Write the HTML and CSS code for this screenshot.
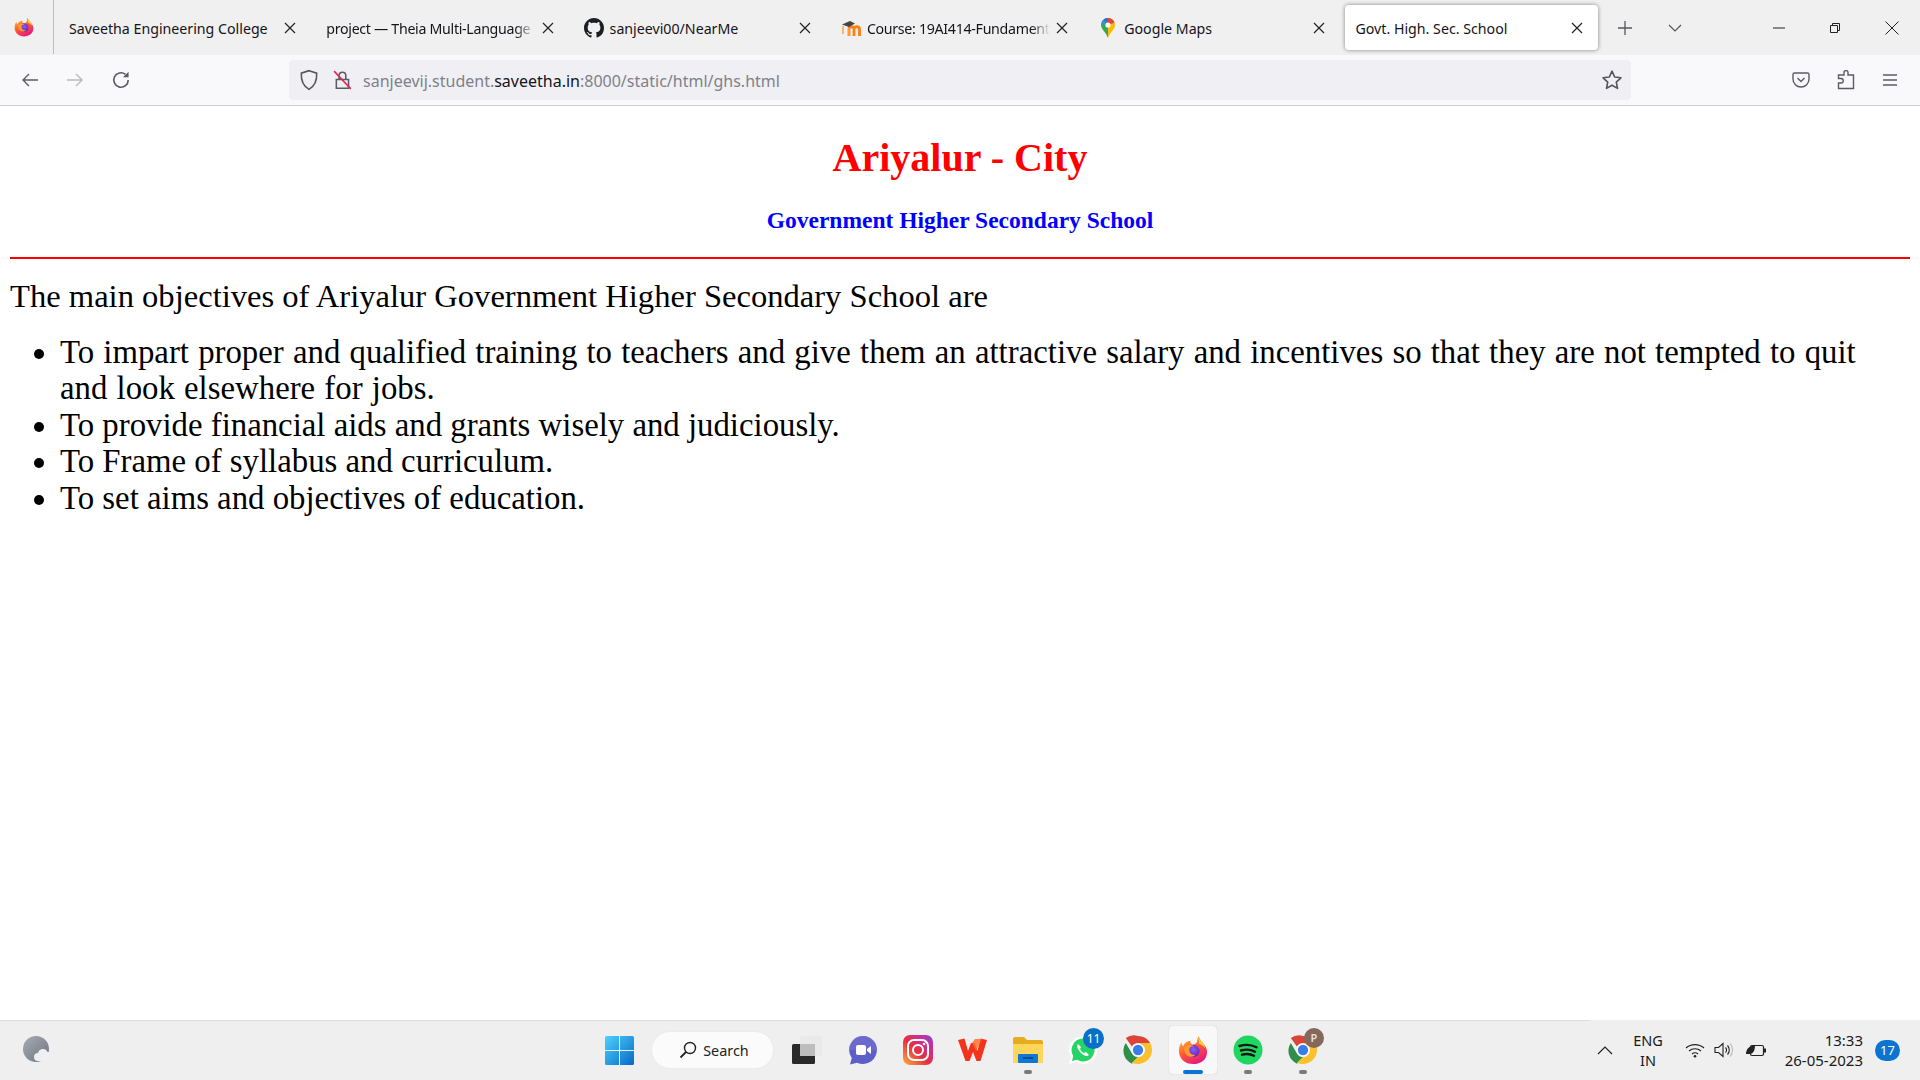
FILE: index.html
```html
<!DOCTYPE html>
<html lang="en">
<head>
<meta charset="utf-8">
<title>Govt. High. Sec. School</title>
<link rel="stylesheet" href="styles.css">
</head>
<body>
<svg class="defs" width="0" height="0" aria-hidden="true">
  <defs>
    <linearGradient id="ffbody" x1="0.2" y1="0.1" x2="0.7" y2="1">
      <stop offset="0" stop-color="#ffb02e"/><stop offset="0.45" stop-color="#ff5634"/><stop offset="1" stop-color="#e31587"/>
    </linearGradient>
    <radialGradient id="ffglobe" cx="0.5" cy="0.4" r="0.6">
      <stop offset="0" stop-color="#9059ff"/><stop offset="1" stop-color="#5b2ab5"/>
    </radialGradient>
    <symbol id="firefox" viewBox="0 0 32 32">
      <path d="M22 1c1 4 3 5 5 8 2 3 4 5 4 9 0 8-6.600 13-15 13S1 25 1 17c0-4 1-7 3-9 0 2 .6 3 1.500 4 1-3 4-6 8-6-1 2 0 3 2 4 3 0 5-2 5-4 0-2 1-3 1.500-5z" fill="url(#ffbody)"/>
      <path d="M21 3c4 3 7 6 8 11-2-3-5-4-7-5 1-2 0-4-1-6z" fill="#ffd43b"/>
      <circle cx="16.500" cy="17" r="6.500" fill="url(#ffglobe)"/>
      <path d="M7 13c3-3 7-3 10-1-3 0-5 1-5 4 0 4 4 6 7 5-3 3-8 3-11-1-1-2-2-5-1-7z" fill="#ff9a2e"/>
    </symbol>
    <symbol id="chrome" viewBox="0 0 32 32">
      <path d="M16 1a15 15 0 0 1 13 7.500H16a7.500 7.500 0 0 0-6.500 3.750L3 3.200 A15 15 0 0 1 16 1z" fill="#db4437"/>
      <path d="M3 8.500l6.500 11.250A7.500 7.500 0 0 0 16 23.500l-6.500 7.100A15 15 0 0 1 3 8.500z" fill="#2f8f4a"/>
      <path d="M29 8.500A15 15 0 0 1 9.500 29.500L16 23.500a7.500 7.500 0 0 0 6.500-11.250L16 8.500z" fill="#fbc02d"/>
      <circle cx="16" cy="16" r="7" fill="#fff"/>
      <circle cx="16" cy="16" r="5.500" fill="#3b7de8"/>
    </symbol>
    <symbol id="closex" viewBox="0 0 12 12">
      <path d="M1 1l10 10M11 1L1 11" fill="none" stroke="#222" stroke-width="1.200"/>
    </symbol>
  </defs>
</svg>

<div class="window">
  <header class="tabstrip">
    <div class="appcell">
      <svg class="favicon" width="20" height="20"><use href="#firefox"/></svg>
    </div>
    <div class="tabs">
      <div class="tab">
        <span class="tab-title">Saveetha Engineering College</span>
        <svg class="close" width="12" height="12"><use href="#closex"/></svg>
      </div>
      <div class="tab">
        <span class="tab-title fade tight">project — Theia Multi-Language</span>
        <svg class="close" width="12" height="12"><use href="#closex"/></svg>
      </div>
      <div class="tab">
        <svg class="favicon" width="20" height="20" viewBox="0 0 16 16"><path fill="#1b1f23" d="M8 0C3.580 0 0 3.580 0 8c0 3.540 2.290 6.530 5.470 7.590.4.070.55-.17.55-.38 0-.19-.01-.82-.01-1.490-2.010.37-2.530-.49-2.690-.94-.09-.23-.48-.94-.82-1.130-.28-.15-.68-.52-.01-.53.63-.01 1.080.58 1.230.82.720 1.210 1.870.87 2.330.66.070-.52.280-.87.510-1.070-1.780-.2-3.640-.89-3.640-3.950 0-.87.310-1.590.820-2.150-.08-.2-.36-1.020.08-2.120 0 0 .67-.21 2.200.82.640-.18 1.320-.27 2-.27s1.360.09 2 .27c1.530-1.040 2.200-.82 2.200-.82.440 1.100.160 1.920.080 2.120.51.560.82 1.270.82 2.150 0 3.070-1.870 3.750-3.650 3.950.29.250.54.730.54 1.480 0 1.070-.01 1.930-.01 2.200 0 .21.150.46.550.38A8.010 8.010 0 0 0 16 8c0-4.420-3.580-8-8-8z"/></svg>
        <span class="tab-title">sanjeevi00/NearMe</span>
        <svg class="close" width="12" height="12"><use href="#closex"/></svg>
      </div>
      <div class="tab">
        <svg class="favicon" width="20" height="20" viewBox="0 0 20 20"><path d="M8 18v-7c0-3 5-3 5 0v7M13 18v-7c0-3 5.500-3 5.500 0v7" fill="none" stroke="#f98012" stroke-width="2.800"/><path d="M2 8v8M8 18v-8" fill="none" stroke="#f9a24e" stroke-width="1.500"/><path d="M1 6.500L9 3l5 2.500-6 3.500z" fill="#444"/></svg>
        <span class="tab-title fade tight">Course: 19AI414-Fundament</span>
        <svg class="close" width="12" height="12"><use href="#closex"/></svg>
      </div>
      <div class="tab">
        <svg class="favicon" width="20" height="20" viewBox="0 0 20 20"><path d="M10 0a7 7 0 0 0-7 7c0 4.500 5 7 7 13z" fill="#34a853"/><path d="M10 0a7 7 0 0 1 7 7c0 4.500-5 7-7 13z" fill="#fbbc04"/><path d="M4.800 2.300A7 7 0 0 1 10 0v4.500z" fill="#1a73e8"/><path d="M10 0a7 7 0 0 1 6.500 4.500L10 7z" fill="#ea4335"/><path d="M3 7a7 7 0 0 1 1.800-4.700L8 5z" fill="#4285f4"/><circle cx="10" cy="7" r="2.600" fill="#fff"/></svg>
        <span class="tab-title">Google Maps</span>
        <svg class="close" width="12" height="12"><use href="#closex"/></svg>
      </div>
      <div class="tab active">
        <span class="tab-title">Govt. High. Sec. School</span>
        <svg class="close" width="12" height="12"><use href="#closex"/></svg>
      </div>
    </div>
    <div class="tab-actions">
      <svg width="16" height="16" viewBox="0 0 16 16"><path d="M8 1v14M1 8h14" stroke="#55555c" stroke-width="1.300" fill="none"/></svg>
      <svg width="14" height="8" viewBox="0 0 14 8"><path d="M1 1l6 6 6-6" stroke="#55555c" stroke-width="1.200" fill="none"/></svg>
    </div>
    <div class="win-controls">
      <svg width="12" height="12" viewBox="0 0 12 12"><path d="M0 6h12" stroke="#222" stroke-width="1"/></svg>
      <svg width="12" height="12" viewBox="0 0 12 12"><path d="M1.500 3.500h7v7h-7zM3.500 3.500v-2h7v7h-2" fill="none" stroke="#222" stroke-width="1"/></svg>
      <svg width="14" height="14" viewBox="0 0 14 14"><path d="M.5.500l13 13M13.500.500l-13 13" stroke="#222" stroke-width="1"/></svg>
    </div>
  </header>

  <nav class="toolbar">
    <div class="nav-btns">
      <svg width="18" height="16" viewBox="0 0 18 16"><path d="M17 8H2M8 2L2 8l6 6" fill="none" stroke="#5b5b66" stroke-width="1.400"/></svg>
      <svg width="18" height="16" viewBox="0 0 18 16"><path d="M1 8h15M10 2l6 6-6 6" fill="none" stroke="#b9b9bf" stroke-width="1.400"/></svg>
      <svg width="20" height="20" viewBox="0 0 18 18"><path d="M15.500 9A6.500 6.500 0 1 1 13 3.900" fill="none" stroke="#5b5b66" stroke-width="1.500"/><path d="M15.800 1.500v5h-5z" fill="#5b5b66"/></svg>
    </div>
    <div class="urlbar">
      <svg width="20" height="22" viewBox="0 0 18 20"><path d="M9 1.500l7 2.300c.3 6.500-1.500 11.500-7 14.700C3.500 15.300 1.700 10.300 2 3.800z" fill="none" stroke="#55555c" stroke-width="1.400"/></svg>
      <svg class="lock" width="20" height="24" viewBox="0 0 18 20"><path d="M3 9.500h11v8H3zM5.500 9.500V6a3 3 0 0 1 6 0v3.500" fill="none" stroke="#5b5b66" stroke-width="1.400"/><path d="M1 2l15 16" stroke="#e22850" stroke-width="1.400"/></svg>
      <span class="url"><span class="dim">sanjeevij.student.</span>saveetha.in<span class="dim">:8000/static/html/ghs.html</span></span>
      <svg class="star" width="22" height="22" viewBox="0 0 20 20"><path d="M10 2l2.400 5.300 5.700.7-4.200 3.900 1.100 5.700-5-2.900-5 2.900 1.100-5.700L1.900 8l5.700-.7z" fill="none" stroke="#55555c" stroke-width="1.500" stroke-linejoin="round"/></svg>
    </div>
    <div class="tool-btns">
      <svg width="18" height="18" viewBox="0 0 18 18"><path d="M2.500 2h13A1.500 1.500 0 0 1 17 3.500V8A8 8 0 0 1 1 8V3.500A1.500 1.500 0 0 1 2.500 2z" fill="none" stroke="#5b5b66" stroke-width="1.400"/><path d="M5.500 7L9 10.500 12.500 7" fill="none" stroke="#5b5b66" stroke-width="1.500"/></svg>
      <svg width="18" height="20" viewBox="0 0 18 20"><path d="M7 2.500a2 2 0 0 1 4 0V5h5.500v13.500H1.500V13H4a2 2 0 0 0 0-4.500H1.500V5H7z" fill="none" stroke="#5b5b66" stroke-width="1.400"/></svg>
      <svg width="16" height="14" viewBox="0 0 16 14"><path d="M1 2h14M1 7h14M1 12h14" stroke="#5b5b66" stroke-width="1.400"/></svg>
    </div>
  </nav>

  <main class="page">
    <h1 class="city">Ariyalur - City</h1>
    <h2 class="school">Government Higher Secondary School</h2>
    <hr class="rule">
    <p class="intro">The main objectives of Ariyalur Government Higher Secondary School are</p>
    <ul class="objectives">
      <li class="long">To impart proper and qualified training to teachers and give them an attractive salary and incentives so that they are not tempted to quit and look elsewhere for jobs.</li>
      <li>To provide financial aids and grants wisely and judiciously.</li>
      <li>To Frame of syllabus and curriculum.</li>
      <li>To set aims and objectives of education.</li>
    </ul>
  </main>

  <footer class="taskbar">
    <div class="task-left">
      <svg width="30" height="30" viewBox="0 0 30 30"><defs><linearGradient id="moon" x1="0" y1="0" x2="1" y2="1"><stop offset="0" stop-color="#a6abb3"/><stop offset="1" stop-color="#6f7680"/></linearGradient></defs><circle cx="14" cy="14" r="13" fill="url(#moon)"/><path d="M16 26a4 4 0 0 1 0-8 5 5 0 0 1 9.500-1 4.500 4.500 0 0 1 1 9z" fill="#eef0f2"/></svg>
    </div>
    <div class="task-center">
      <div class="tile">
        <svg width="29" height="29" viewBox="0 0 29 29"><defs><linearGradient id="win" x1="0" y1="0" x2="1" y2="1"><stop offset="0" stop-color="#4fd1fb"/><stop offset="1" stop-color="#0669c9"/></linearGradient></defs><path fill="url(#win)" d="M0 1.500A1.500 1.500 0 0 1 1.500 0H14v14H0zM15 0h12.500A1.500 1.500 0 0 1 29 1.500V14H15zM0 15h14v14H1.500A1.500 1.500 0 0 1 0 27.500zM15 15h14v12.500a1.500 1.500 0 0 1-1.500 1.500H15z"/></svg>
      </div>
      <div class="search">
        <svg width="18" height="18" viewBox="0 0 18 18"><circle cx="11" cy="7" r="5.500" fill="none" stroke="#222" stroke-width="1.400"/><path d="M7 11l-5.500 5.500" stroke="#222" stroke-width="1.800"/></svg>
        <span>Search</span>
      </div>
      <div class="tile">
        <svg width="32" height="30" viewBox="0 0 32 30"><rect x="8" y="1" width="22" height="20" rx="1.500" fill="#e9e9e9"/><rect x="0" y="9" width="23" height="20" rx="1.500" fill="#2a2a2a"/><rect x="8" y="9" width="15" height="12" fill="#bdbdbd"/></svg>
      </div>
      <div class="tile">
        <svg width="30" height="30" viewBox="0 0 30 30"><path d="M15 1a14 14 0 1 1-6 26.700L2 29.500l1.800-6.500A14 14 0 0 1 15 1z" fill="#5b5fc7"/><path d="M15 1a14 14 0 0 1 14 14H1A14 14 0 0 1 15 1z" fill="#7c6fd0" opacity=".6"/><rect x="8" y="10" width="10" height="10" rx="2" fill="#fff"/><path d="M19 14l4-3v8l-4-3z" fill="#fff"/></svg>
      </div>
      <div class="tile">
        <svg width="30" height="30" viewBox="0 0 30 30"><defs><linearGradient id="ig" x1="0" y1="1" x2="1" y2="0"><stop offset="0" stop-color="#fdb03a"/><stop offset=".45" stop-color="#e6303f"/><stop offset=".8" stop-color="#c72ea0"/><stop offset="1" stop-color="#5f5ad2"/></linearGradient></defs><rect width="30" height="30" rx="7" fill="url(#ig)"/><rect x="5" y="5" width="20" height="20" rx="6" fill="none" stroke="#fff" stroke-width="2"/><circle cx="15" cy="15" r="5" fill="none" stroke="#fff" stroke-width="2"/><circle cx="21" cy="9" r="1.300" fill="#fff"/></svg>
      </div>
      <div class="tile">
        <svg width="30" height="26" viewBox="0 0 30 26"><path d="M0 3l6.500-1.500L10 14l3-8h3.500l3 8 3-12.500L29 3l-6.500 21h-4L15 15l-3.500 9h-4z" fill="#f5331d"/><path d="M14 6l3-4h7l-6 12z" fill="#ff6a2b" opacity=".8"/></svg>
      </div>
      <div class="tile">
        <svg width="30" height="26" viewBox="0 0 30 26"><path d="M0 2a2 2 0 0 1 2-2h9l3 3h14a2 2 0 0 1 2 2v19a2 2 0 0 1-2 2H2a2 2 0 0 1-2-2z" fill="#e6ab1e"/><path d="M0 7h30v17a2 2 0 0 1-2 2H2a2 2 0 0 1-2-2z" fill="#ffd65c"/><rect x="5" y="17" width="20" height="9" rx="1" fill="#0f78d4"/><path d="M10 21h10" stroke="#063f7c" stroke-width="1.500"/></svg>
        <i class="dot"></i>
      </div>
      <div class="tile">
        <svg width="30" height="30" viewBox="0 0 30 30"><path d="M15 1a14 14 0 1 1-7 26L1 29l2-7A14 14 0 0 1 15 1z" fill="#fff"/><path d="M15 3.500a11.500 11.500 0 1 1-6 21.300L4 26l1.300-5A11.500 11.500 0 0 1 15 3.500z" fill="#25d366"/><path d="M10 9c-2 2 0 6 3 9s6 4 8 2l-3-3-2 1c-2-1-3-2-4-4l1-2z" fill="#fff"/></svg>
        <span class="count">11</span>
      </div>
      <div class="tile">
        <svg width="30" height="30"><use href="#chrome"/></svg>
      </div>
      <div class="tile current">
        <svg width="30" height="30"><use href="#firefox"/></svg>
        <i class="bar"></i>
      </div>
      <div class="tile">
        <svg width="30" height="30" viewBox="0 0 30 30"><circle cx="15" cy="15" r="14.500" fill="#1ed760"/><path d="M6.500 11c6-1.800 12-1.300 17 1.300M8 15.500c5-1.400 10-1 14 1.200M9 19.700c4-1 8.500-.8 12 1" fill="none" stroke="#191414" stroke-width="2.400" stroke-linecap="round"/></svg>
        <i class="dot"></i>
      </div>
      <div class="tile">
        <svg width="30" height="30"><use href="#chrome"/></svg>
        <span class="profile">P</span>
        <i class="dot"></i>
      </div>
    </div>
    <div class="tray">
      <svg class="tray-chev" width="16" height="9" viewBox="0 0 16 9"><path d="M1 8l7-7 7 7" fill="none" stroke="#222" stroke-width="1.200"/></svg>
      <div class="lang"><span>ENG</span><span>IN</span></div>
      <svg class="tray-wifi" width="20" height="15" viewBox="0 0 20 15"><path d="M1 5c5-4.500 13-4.500 18 0M4 8c3.500-3 8.500-3 12 0M7 11c1.800-1.500 4.200-1.500 6 0" fill="none" stroke="#222" stroke-width="1.200"/><circle cx="10" cy="13.300" r="1.300" fill="#222"/></svg>
      <svg class="tray-vol" width="20" height="16" viewBox="0 0 20 16"><path d="M1 5.500h3.500L9 1.500v13l-4.500-4H1z" fill="none" stroke="#222" stroke-width="1.100"/><path d="M11.500 5.500a3.500 3.500 0 0 1 0 5M13.500 3.500a6.500 6.500 0 0 1 0 9" fill="none" stroke="#222" stroke-width="1.100"/><path d="M16 1.500a9.500 9.500 0 0 1 0 13" fill="none" stroke="#bbb" stroke-width="1.100"/></svg>
      <svg class="tray-batt" width="20" height="13" viewBox="0 0 20 13"><rect x="4.500" y="1.500" width="13" height="10" rx="1.500" fill="none" stroke="#222" stroke-width="1.200"/><rect x="18" y="4.500" width="2" height="4" fill="#222"/><path d="M0 10c0-5 3-8 9-9 0 6-2 9-6 9-1 0-2 0-3 0z" fill="#222"/></svg>
      <div class="clock"><span>13:33</span><span>26-05-2023</span></div>
      <span class="notif">17</span>
    </div>
  </footer>
</div>
</body>
</html>
```

FILE: styles.css
```css
* { box-sizing: border-box; }
html, body { margin: 0; height: 100%; overflow: hidden; }
body { background: #fff; }
.defs { display: block; width: 0; height: 0; }

.window { display: flex; flex-direction: column; height: 1080px; }

/* Tab strip */
.tabstrip {
  flex: 0 0 55px;
  display: flex;
  background: #f0f0f0;
  font-family: "Noto Sans", sans-serif;
  font-size: 14.2px;
  color: #15141a;
}
.appcell {
  flex: 0 0 54px;
  border-right: 1px solid #bdbdbd;
  display: flex;
  align-items: center;
  justify-content: center;
  padding-right: 6px;
  margin-bottom: 1px;
}
.tabs { display: flex; gap: 5px; padding: 5px 0 5px 5px; }
.tab {
  width: 252.3px;
  display: flex;
  align-items: center;
  gap: 6px;
  padding: 0 15px 0 10px;
  border-radius: 4px;
}
.tab-title { flex: 1; min-width: 0; white-space: nowrap; overflow: hidden; padding-top: 1px; }
.fade {
  -webkit-mask-image: linear-gradient(to right, #000 90%, transparent 100%);
  mask-image: linear-gradient(to right, #000 90%, transparent 100%);
}
.tight { letter-spacing: -0.3px; }
.favicon { flex: none; }
.close { flex: none; }
.tab.active { background: #fff; box-shadow: 0 0 4px rgba(0, 0, 0, .45); }

.tab-actions { display: flex; align-items: center; gap: 35px; padding-left: 19px; }
.win-controls { margin-left: auto; display: flex; align-items: center; gap: 44px; padding-right: 21px; }

/* Toolbar */
.toolbar {
  flex: 0 0 51px;
  display: flex;
  align-items: center;
  background: #f9f9fb;
  border-bottom: 1px solid #cfcfd8;
}
.nav-btns { flex: 0 0 289px; display: flex; align-items: center; gap: 27px; padding-left: 21px; }
.urlbar {
  width: 1342px;
  height: 40px;
  background: #f0f0f4;
  border-radius: 4px;
  display: flex;
  align-items: center;
  gap: 14px;
  padding: 0 8px 0 10px;
  font-family: "Noto Sans", sans-serif;
  font-size: 16px;
  color: #15141a;
}
.url { flex: 1; white-space: nowrap; margin-left: -4px; padding-top: 2px; }
.dim { color: #80808a; }
.tool-btns { flex: 1; display: flex; align-items: center; justify-content: flex-end; gap: 27px; padding-right: 22px; }

/* Page */
.page { flex: 1; padding: 0 10px; font-family: "Liberation Serif", serif; color: #000; }
.city { margin: 29px 0 0; font-size: 40px; font-weight: 700; color: #f00; text-align: center; line-height: 46px; }
.school { margin: 26px 0 0; font-size: 23.500px; font-weight: 700; color: #00f; text-align: center; line-height: 27px; }
.rule { margin: 23px 0 0; border: 0; height: 2px; background: #f00; }
.intro { margin: 19px 0 0; font-size: 32.600px; line-height: 37px; }
.objectives { margin: 19px 0 0; padding: 0 50px; font-size: 32.800px; line-height: 36.400px; }
.long { word-spacing: 1px; }

/* Taskbar */
.taskbar {
  flex: 0 0 60px;
  display: flex;
  align-items: center;
  background: linear-gradient(#dcdcdc, #dcdcdc) no-repeat 0 0 / 1590px 1px, #efefef;
  font-family: "Noto Sans", sans-serif;
}
.task-left { flex: 0 0 595px; display: flex; align-items: center; padding-left: 22px; }
.task-center { display: flex; align-items: center; gap: 7px; }
.tile {
  position: relative;
  width: 48px;
  height: 48px;
  display: flex;
  align-items: center;
  justify-content: center;
  border-radius: 4px;
}
.tile.current { background: #f8f8f8; box-shadow: 0 0 1px rgba(0, 0, 0, .25); }
.search {
  width: 123px;
  height: 38px;
  margin: 0 3px 0 1px;
  padding-left: 3px;
  background: #fbfbfb;
  border: 1px solid #ececec;
  border-radius: 19px;
  display: flex;
  align-items: center;
  justify-content: center;
  gap: 6px;
  font-size: 14.400px;
  color: #222;
}
.dot { position: absolute; left: 20px; bottom: 0; width: 8px; height: 4px; border-radius: 2px; background: #7a7a7a; }
.bar { position: absolute; left: 14px; bottom: 0; width: 20px; height: 4px; border-radius: 2px; background: #0a74d6; }
.count {
  position: absolute; top: 2px; right: 3px;
  width: 21px; height: 21px; border-radius: 50%;
  background: #0a6fc9; color: #fff;
  font-size: 12px; line-height: 21px; text-align: center;
}
.profile {
  position: absolute; top: 2px; right: 3px;
  width: 20px; height: 20px; border-radius: 50%;
  background: #84685c; color: #eadfd9;
  font-size: 11px; font-weight: 600; line-height: 20px; text-align: center;
}

.tray { flex: 1; display: flex; align-items: center; font-size: 14.500px; color: #1a1a1a; }
.tray-chev { margin-left: 270px; }
.lang { margin-left: 9px; width: 52px; display: flex; flex-direction: column; align-items: center; line-height: 20px; }
.tray-wifi { margin-left: 11px; }
.tray-vol { margin-left: 9px; }
.tray-batt { margin-left: 12px; }
.clock { margin-left: 6px; width: 91px; display: flex; flex-direction: column; align-items: flex-end; line-height: 20px; font-size: 15px; }
.notif {
  margin-left: 12px;
  width: 25px; height: 21px; border-radius: 11px;
  background: #0a74d0; color: #fff;
  font-size: 13px; line-height: 21px; text-align: center;
}
```
